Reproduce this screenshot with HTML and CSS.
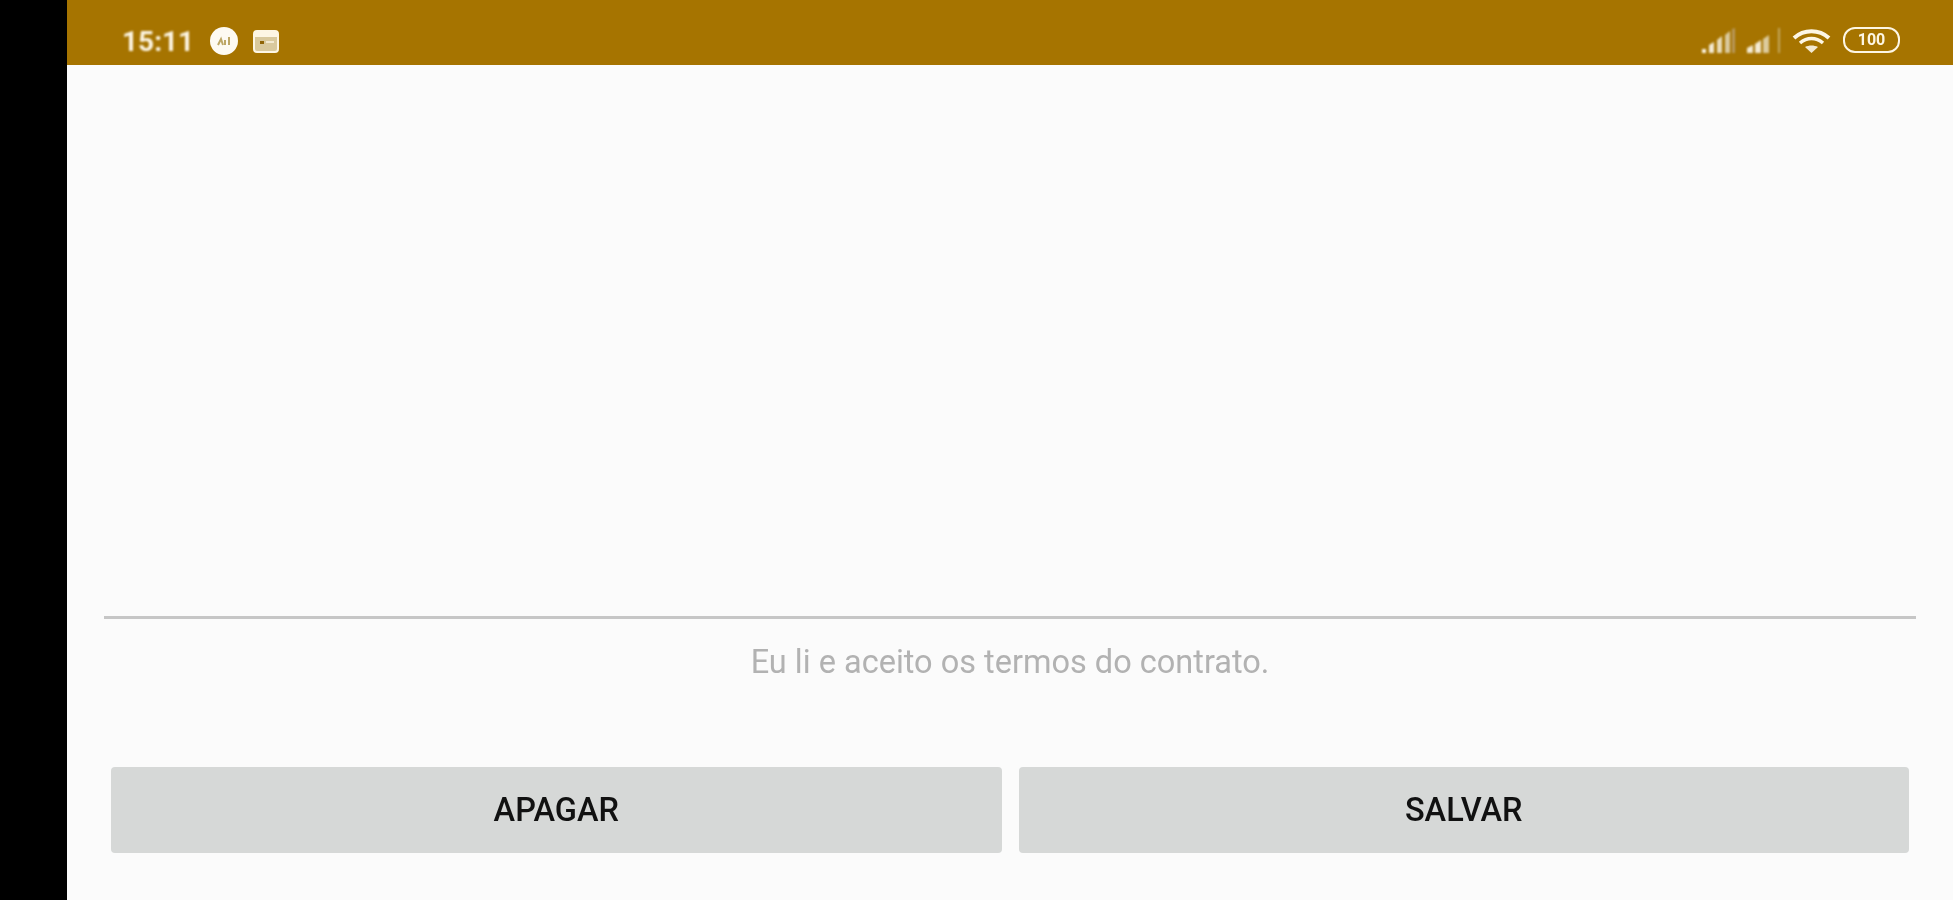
FILE: index.html
```html
<!DOCTYPE html>
<html lang="pt-BR">
<head>
    <meta charset="UTF-8">
    <meta name="viewport" content="width=device-width, initial-scale=1.0">
    <title>Contrato</title>
    <link rel="stylesheet" href="styles.css">
</head>
<body>
    <div class="bezel"></div>
    <div class="screen">
        <!-- barra de status -->
        <div class="status-bar">
            <div class="status-left">
                <span class="clock">15:11</span>
                <svg class="icon-round" viewBox="0 0 28 28">
                    <circle cx="14" cy="14" r="14" fill="#fdfaf2"/>
                    <path d="M8 18l3-6 2 6M15 18v-5M19 18v-8" fill="none" stroke="#bda766" stroke-width="2"/>
                </svg>
                <svg class="icon-card" viewBox="0 0 26 23">
                    <rect x="1" y="1" width="24" height="21" rx="3" fill="#d9c99d" stroke="#fdf6e4" stroke-width="2"/>
                    <rect x="2" y="2" width="22" height="5" fill="#fdf6e4"/>
                    <rect x="7" y="11" width="4" height="3" fill="#8f6405"/>
                    <rect x="13" y="11" width="8" height="2" fill="#f3ead2"/>
                </svg>
            </div>
            <div class="status-right">
                <svg class="icon-signal" viewBox="0 0 33 25">
                    <path d="M0 21h4v4H0z" fill="#fdf6e4"/>
                    <path d="M7 17l5-3v11H7z" fill="#f3ead2"/>
                    <path d="M15 12l5-4v17h-5z" fill="#e9dcb8"/>
                    <path d="M23 7l5-4v22h-5z" fill="#d9c99d"/>
                    <path d="M30 1l3-1v25h-3z" fill="#b8985a"/>
                </svg>
                <svg class="icon-signal" viewBox="0 0 33 25">
                    <path d="M0 20l6-3v8H0z" fill="#f3ead2"/>
                    <path d="M8 16l6-4v13H8z" fill="#f3ead2"/>
                    <path d="M16 11l6-4v18h-6z" fill="#dccb9c"/>
                    <rect x="31" y="0" width="2" height="25" fill="#c4a85f"/>
                </svg>
                <svg class="icon-wifi" viewBox="0 0 39 25">
                    <path d="M2 10C12 1 27 1 37 10" fill="none" stroke="#fdf6e4" stroke-width="4"/>
                    <path d="M8 15C15 9 24 9 31 15" fill="none" stroke="#fdf6e4" stroke-width="3.500"/>
                    <path d="M13 19C17 17 22 17 26 19L19.500 25Z" fill="#f3ead2"/>
                </svg>
                <div class="battery">100</div>
            </div>
        </div>

        <div class="contract-area"></div>
        <div class="contract-line"></div>
        <p class="terms">Eu li e aceito os termos do contrato.</p>

        <div class="actions">
            <button class="btn"><span class="btn-label">APAGAR</span></button>
            <button class="btn"><span class="btn-label">SALVAR</span></button>
        </div>
    </div>
</body>
</html>
```

FILE: styles.css
```css
html, body {
    height: 100%;
}
body {
    margin: 0;
    display: flex;
    font-family: Roboto, "Liberation Sans", sans-serif;
    background-color: #fbfbfb;
    overflow: hidden;
}
.bezel {
    width: 67px;
    background-color: #000;
}
.screen {
    flex: 1;
    display: flex;
    flex-direction: column;
}
.status-bar {
    height: 65px;
    display: flex;
    justify-content: space-between;
    align-items: flex-start;
    padding: 27px 53px 0 55px;
    box-sizing: border-box;
    background-color: #a67400;
    color: #fdf6e4;
}
.status-left, .status-right {
    display: flex;
    align-items: center;
}
.status-left {
    height: 28px;
}
.clock {
    font-size: 28px;
    font-weight: 700;
    width: 88px;
    filter: blur(0.8px);
}
.icon-round {
    width: 28px;
    height: 28px;
    margin-right: 15px;
    filter: blur(0.6px);
}
.icon-card {
    width: 26px;
    height: 23px;
    filter: blur(0.6px);
}
.status-right {
    gap: 12px;
}
.icon-signal {
    width: 33px;
    height: 25px;
    filter: blur(0.8px);
}
.icon-wifi {
    width: 39px;
    height: 25px;
    filter: blur(0.6px);
}
.battery {
    width: 57px;
    height: 26px;
    box-sizing: border-box;
    border: 2px solid #fdf6e4;
    border-radius: 12px;
    font-size: 16px;
    font-weight: 700;
    line-height: 22px;
    text-align: center;
    filter: blur(0.7px);
}
.contract-area {
    flex: 1;
}
.contract-line {
    height: 3px;
    margin: 0 37px;
    background-color: #c6c6c6;
}
.terms {
    margin: 0;
    padding-top: 24px;
    height: 148px;
    box-sizing: border-box;
    text-align: center;
    font-size: 32.500px;
    line-height: 38px;
    color: #b2b2b2;
    filter: blur(0.6px);
}
.actions {
    display: flex;
    gap: 17px;
    padding: 0 44px 47px;
}
.btn {
    flex: 1;
    height: 86px;
    border: none;
    border-radius: 4px;
    background-color: #d6d8d7;
    color: #111;
    font-family: inherit;
    font-size: 32.500px;
    font-weight: 500;
    cursor: pointer;
}
.btn-label {
    display: inline-block;
    filter: blur(0.6px);
}
```
